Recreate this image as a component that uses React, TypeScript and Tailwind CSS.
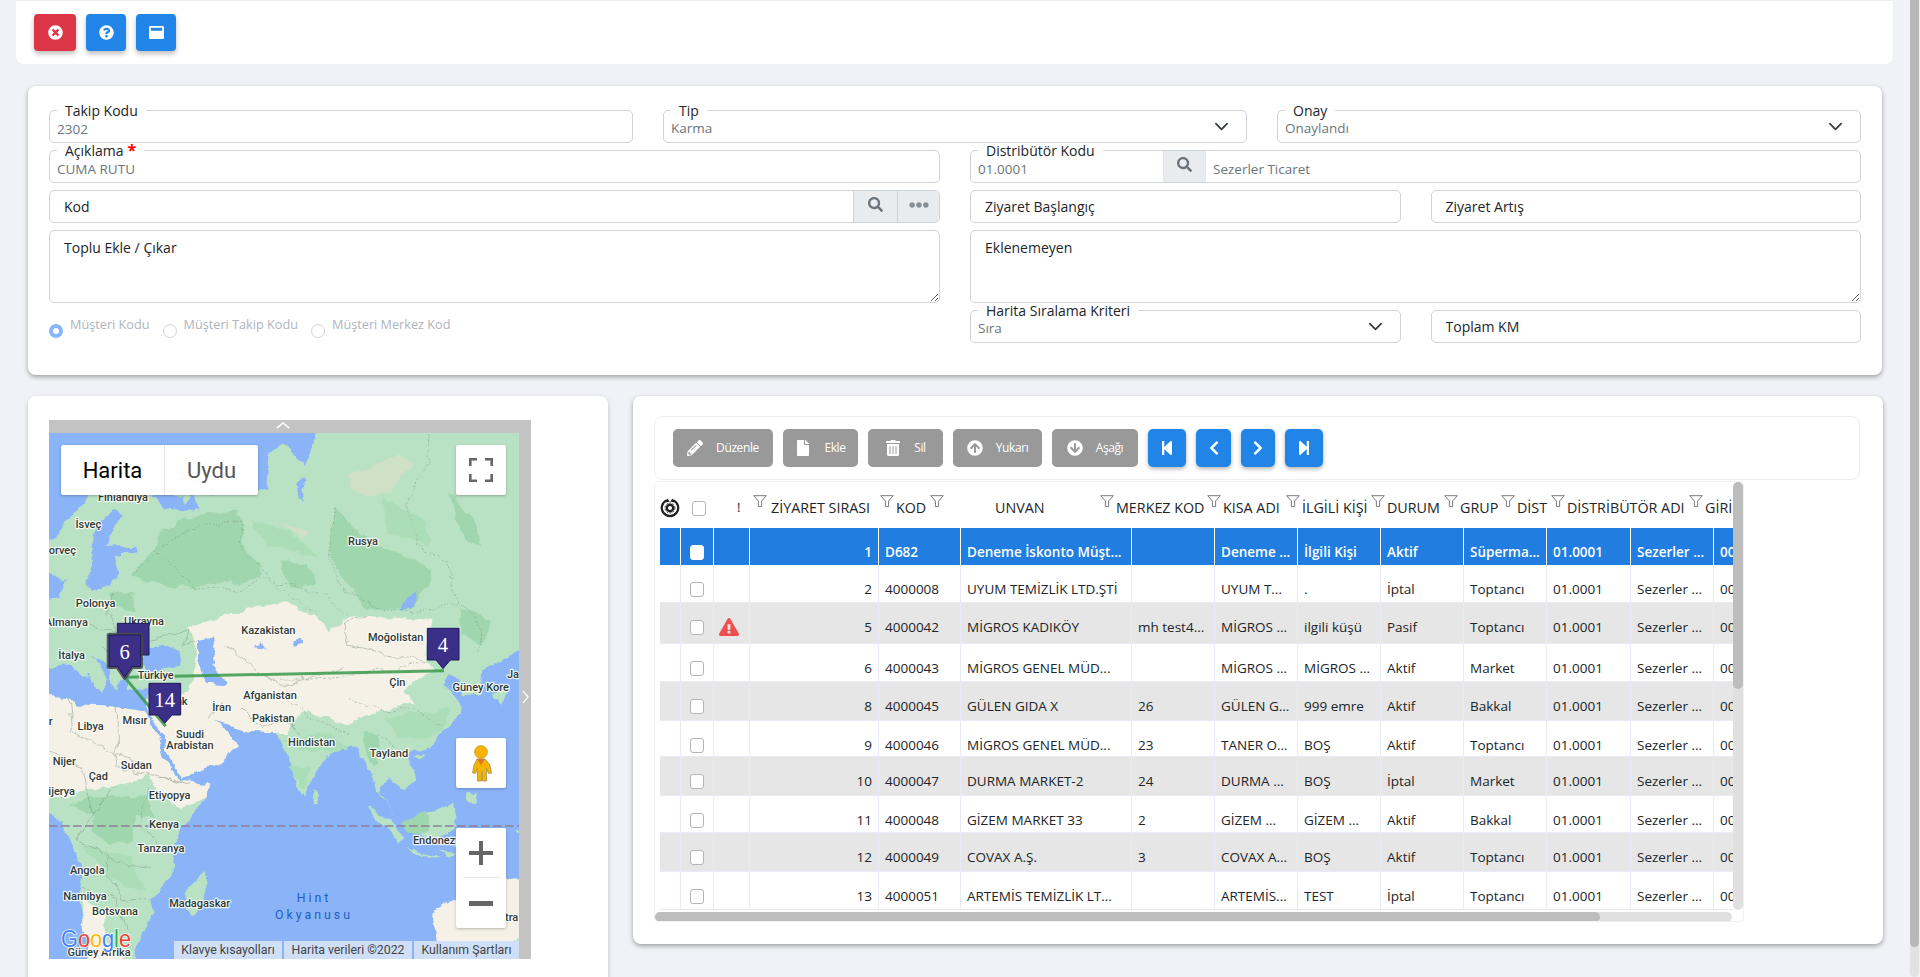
import React from 'react';
import {
  FaTimesCircle,
  FaQuestionCircle,
  FaWindowMaximize,
  FaSearch,
  FaEllipsisH,
  FaPencilAlt,
  FaFile,
  FaTrashAlt,
  FaArrowCircleUp,
  FaArrowCircleDown,
  FaStepBackward,
  FaStepForward,
  FaChevronLeft,
  FaChevronRight,
  FaExclamationTriangle,
} from 'react-icons/fa';

const Chevron = () => (
  <svg viewBox="0 0 16 16" className="w-[15px] h-[15px] shrink-0 text-[#343a40]" fill="none" stroke="currentColor" strokeWidth="1.8" strokeLinecap="round" strokeLinejoin="round">
    <path d="M2 5l6 6 6-6" />
  </svg>
);

const FloatLabel = ({ text, required }: { text: string; required?: boolean }) => (
  <span className="absolute -top-[8px] left-[7px] bg-white px-2 text-[14px] leading-4 font-medium text-[#212529] whitespace-nowrap">
    {text}
    {required && <span className="text-[#ff0000] text-[16px] leading-3 ml-1 font-bold">*</span>}
  </span>
);

const Field = ({ label, value, required }: { label: string; value: string; required?: boolean }) => (
  <div className="relative h-[33px] rounded-[5px] border border-[#ced4da] bg-white">
    <FloatLabel text={label} required={required} />
    <input readOnly value={value} className="w-full h-full pl-[7px] pt-[5px] text-[13.500px] text-[#6c757d] bg-transparent outline-none rounded-[5px]" />
  </div>
);

const SelectField = ({ label, value }: { label: string; value: string }) => (
  <div className="relative h-[33px] rounded-[5px] border border-[#ced4da] bg-white flex items-center justify-between pl-[7px] pr-[17px]">
    <FloatLabel text={label} />
    <span className="pt-[4px] text-[13.500px] text-[#6c757d]">{value}</span>
    <Chevron />
  </div>
);

const PlainField = ({ label }: { label: string }) => (
  <input
    readOnly
    placeholder={label}
    className="w-full h-[33px] rounded-[5px] border border-[#ced4da] bg-white pl-[14px] text-[14px] font-medium outline-none placeholder:text-[#212529] placeholder:opacity-100"
  />
);

const AreaField = ({ label }: { label: string }) => (
  <textarea
    readOnly
    placeholder={label}
    className="block w-full h-[73px] rounded-[5px] border border-[#ced4da] bg-white pl-[14px] pt-[6px] text-[14px] font-medium outline-none placeholder:text-[#212529] placeholder:opacity-100"
  />
);

const Radio = ({ label, checked }: { label: string; checked?: boolean }) => (
  <div className="flex items-start gap-[7px]">
    <span className={`mt-[8px] w-[14px] h-[14px] rounded-full bg-white ${checked ? 'border-[4px] border-[#86b7fe]' : 'border border-[#ced4da]'}`} />
    <span className="text-[12.700px] leading-4 text-[#adb5bd]">{label}</span>
  </div>
);

const grayButtons = [
  { label: 'Düzenle', icon: FaPencilAlt, w: 'w-[100px]' },
  { label: 'Ekle', icon: FaFile, w: 'w-[75px]' },
  { label: 'Sil', icon: FaTrashAlt, w: 'w-[75px]' },
  { label: 'Yukarı', icon: FaArrowCircleUp, w: 'w-[89px]' },
  { label: 'Aşağı', icon: FaArrowCircleDown, w: 'w-[86px]' },
];

const blueButtons = [
  { icon: FaStepBackward, w: 'w-[38px]' },
  { icon: FaChevronLeft, w: 'w-[35px]' },
  { icon: FaChevronRight, w: 'w-[34px]' },
  { icon: FaStepForward, w: 'w-[38px]' },
];

const headers = [
  { label: 'ZİYARET SIRASI', w: 'w-[127px]', pad: 'pl-[2px]' },
  { label: 'KOD', w: 'w-[50px]' },
  { label: 'UNVAN', w: 'w-[170px]', pad: 'pl-[49px]' },
  { label: 'MERKEZ KOD', w: 'w-[107px]' },
  { label: 'KISA ADI', w: 'w-[79px]' },
  { label: 'İLGİLİ KİŞİ', w: 'w-[85px]' },
  { label: 'DURUM', w: 'w-[73px]' },
  { label: 'GRUP', w: 'w-[57px]' },
  { label: 'DİST', w: 'w-[50px]' },
  { label: 'DİSTRİBÜTÖR ADI', w: 'w-[138px]' },
  { label: 'GİRİŞ', w: 'w-[60px]' },
];

const colWidths = ['w-[21px]', 'w-[33px]', 'w-[36px]', 'w-[129px]', 'w-[82px]', 'w-[171px]', 'w-[83px]', 'w-[83px]', 'w-[83px]', 'w-[83px]', 'w-[83px]', 'w-[84px]', 'w-[83px]', 'w-[83px]'];

const rows = [
  { h: 'h-[37px]', tone: 'blue', warn: false, cells: ['1', 'D682', 'Deneme İskonto Müşt...', '', 'Deneme ...', 'İlgili Kişi', 'Aktif', 'Süperma...', '01.0001', 'Sezerler ...', '0001'] },
  { h: 'h-[38px]', tone: 'white', warn: false, cells: ['2', '4000008', 'UYUM TEMİZLİK LTD.ŞTİ', '', 'UYUM T...', '.', 'İptal', 'Toptancı', '01.0001', 'Sezerler ...', '0001'] },
  { h: 'h-[41px]', tone: 'gray', warn: true, cells: ['5', '4000042', 'MİGROS KADIKÖY', 'mh test4...', 'MİGROS ...', 'ilgili küşü', 'Pasif', 'Toptancı', '01.0001', 'Sezerler ...', '0001'] },
  { h: 'h-[38px]', tone: 'white', warn: false, cells: ['6', '4000043', 'MİGROS GENEL MÜD...', '', 'MİGROS ...', 'MİGROS ...', 'Aktif', 'Market', '01.0001', 'Sezerler ...', '0001'] },
  { h: 'h-[39px]', tone: 'gray', warn: false, cells: ['8', '4000045', 'GÜLEN GIDA X', '26', 'GÜLEN G...', '999 emre', 'Aktif', 'Bakkal', '01.0001', 'Sezerler ...', '0001'] },
  { h: 'h-[36px]', tone: 'white', warn: false, cells: ['9', '4000046', 'MİGROS GENEL MÜD...', '23', 'TANER O...', 'BOŞ', 'Aktif', 'Toptancı', '01.0001', 'Sezerler ...', '0001'] },
  { h: 'h-[39px]', tone: 'gray', warn: false, cells: ['10', '4000047', 'DURMA MARKET-2', '24', 'DURMA ...', 'BOŞ', 'İptal', 'Market', '01.0001', 'Sezerler ...', '0001'] },
  { h: 'h-[37px]', tone: 'white', warn: false, cells: ['11', '4000048', 'GİZEM MARKET 33', '2', 'GİZEM ...', 'GİZEM ...', 'Aktif', 'Bakkal', '01.0001', 'Sezerler ...', '0001'] },
  { h: 'h-[39px]', tone: 'gray', warn: false, cells: ['12', '4000049', 'COVAX A.Ş.', '3', 'COVAX A...', 'BOŞ', 'Aktif', 'Toptancı', '01.0001', 'Sezerler ...', '0001'] },
  { h: 'h-[38px]', tone: 'white', warn: false, cells: ['13', '4000051', 'ARTEMİS TEMİZLİK LT...', '', 'ARTEMİS...', 'TEST', 'İptal', 'Toptancı', '01.0001', 'Sezerler ...', '0001'] },
];

const FilterIcon = () => (
  <svg viewBox="0 0 14 13" className="w-[14px] h-[13px] shrink-0 -mt-[14px]" fill="#fff" stroke="#7a7a7a" strokeWidth="1">
    <path d="M.7.7h12.6L8.6 6v5.6H5.4V6z" />
  </svg>
);

const SettingsIcon = () => (
  <svg viewBox="0 0 20 20" className="w-5 h-5 shrink-0" fill="none">
    <path d="M7 2.2A8.2 8.2 0 1 0 13 2.2" stroke="#1f1f1f" strokeWidth="2.2" />
    <path d="M7.4 .6 9.8 3.4 6 4.4z M12.6 .6 10.2 3.4 14 4.4z" fill="#1f1f1f" />
    <circle cx="10" cy="10" r="3.2" stroke="#1f1f1f" strokeWidth="2.4" />
    <circle cx="10" cy="10" r="5" stroke="#1f1f1f" strokeWidth="1" strokeDasharray="1.6 1.6" />
  </svg>
);

const Checkbox = ({ white }: { white?: boolean }) => (
  <span className={`block w-[14px] h-[15px] rounded-[3px] border ${white ? 'bg-white border-white' : 'bg-white border-[#b5b5b5]'}`} />
);

// map labels, x and y in the 3x drawing units of the map
const mapLabels: [string, number, number][] = [
  ['Finlandiya', 222, 194],
  ['İsveç', 118, 273],
  ['orveç', 40, 353],
  ['Rusya', 942, 326],
  ['Polonya', 140, 512],
  ['Almanya', 52, 569],
  ['Ukrayna', 285, 566],
  ['Kazakistan', 658, 591],
  ['Moğolistan', 1040, 613],
  ['İtalya', 68, 666],
  ['Türkiye', 320, 728],
  ['Çin', 1045, 748],
  ['Güney Kore', 1295, 763],
  ['Ja', 1392, 724],
  ['Afganistan', 663, 788],
  ['İran', 518, 823],
  ['Irak', 388, 806],
  ['Pakistan', 673, 856],
  ['Mısır', 258, 861],
  ['Libya', 125, 879],
  ['r', 5, 866],
  ['Suudi', 423, 903],
  ['Arabistan', 423, 936],
  ['Hindistan', 788, 928],
  ['Tayland', 1020, 962],
  ['Nijer', 46, 986],
  ['Çad', 148, 1029],
  ['Sudan', 262, 996],
  ['ijerya', 38, 1076],
  ['Etiyopya', 362, 1087],
  ['Kenya', 345, 1174],
  ['Tanzanya', 336, 1246],
  ['Endonezya', 1172, 1222],
  ['Angola', 115, 1312],
  ['Namibya', 108, 1389],
  ['Madagaskar', 452, 1411],
  ['Botsvana', 198, 1434],
  ['Güney Afrika', 150, 1558],
  ['tra', 1388, 1454],
];

const Marker = ({ x, y, tip, text, halo }: { x: number; y: number; tip: number; text?: string; halo?: boolean }) => {
  const d = `M${x} ${y}h95v95h-26L${x + 47} ${tip}L${x + 26} ${y + 95}H${x}z`;
  return (
    <g>
      {halo && <path d={d} fill="#4b4b4b" stroke="#4b4b4b" strokeWidth="14" strokeLinejoin="round" opacity="0.85" />}
      <path d={d} fill="#3b2f88" stroke="#1d1a5c" strokeWidth="3" strokeLinejoin="round" />
      {text && (
        <text x={x + 47} y={y + 50} textAnchor="middle" dominantBaseline="central" fill="#fff" fontSize="62" fontFamily="'Liberation Serif', serif" fontWeight="500">
          {text}
        </text>
      )}
    </g>
  );
};

const MapDrawing = () => (
  <svg viewBox="0 0 1410 1578" className="block w-full h-full" preserveAspectRatio="none">
    <defs>
      <filter id="rough" x="-5%" y="-5%" width="110%" height="110%">
        <feTurbulence type="fractalNoise" baseFrequency="0.018" numOctaves="4" seed="7" result="n" />
        <feDisplacementMap in="SourceGraphic" in2="n" scale="34" xChannelSelector="R" yChannelSelector="G" />
        <feGaussianBlur stdDeviation="1.2" />
      </filter>
    </defs>
    <rect width="1410" height="1578" fill="#8ab4f7" />
    <g filter="url(#rough)">
      {/* Eurasia */}
      <path
        fill="#b9e2c5"
        d="M800 -30L1440 -30V640L1350 680 1300 720 1292 785 1245 790 1240 745 1200 725 1188 755 1218 800 1240 826 1200 886 1150 926 1110 956 1065 956 1100 1016 1105 1046 1060 1076 1040 1051 1010 1031 995 1076 1040 1161 1010 1106 985 1076 960 1006 920 941 870 941 800 1011 765 1091 720 986 700 926 680 896 600 896 480 861 440 815 470 850 520 880 570 936 500 996 400 1041 350 956 322 871 300 846 296 826 300 770 240 770 240 720 205 770 180 715 125 660 180 745 155 785 125 735 70 695 -30 695V510L35 495 50 440 -30 400V340L30 295 70 235 130 185 620 180 655 172 662 60 700 30 735 55 775 100 790 40z"
      />
      {/* Africa */}
      <path
        fill="#b9e2c5"
        d="M-30 785L60 790 80 815 150 816 200 821 290 836 308 871 343 976 395 1048 487 1054 470 1096 395 1181 375 1256 370 1336 310 1396 315 1446 280 1496 245 1600H130L100 1466 85 1386 100 1326 80 1256 60 1206 40 1161 -30 1126z"
      />
      {/* Islands */}
      <path fill="#b9e2c5" d="M410 1376L470 1316 476 1366 430 1456 405 1436z M790 1076L806 1086 812 1116 796 1116z M955 1121L1000 1140 1070 1216 1050 1226 1000 1180z M1070 1246L1170 1266 1172 1272 1100 1262z M1105 1161L1160 1130 1210 1116 1222 1186 1140 1226 1110 1200z M1250 1076L1290 1086 1280 1116 1255 1100z M1095 975L1120 965 1115 985z M1330 786L1380 770 1360 815z M1400 1190L1440 1180V1230z M1170 1246L1220 1262 1190 1272z" />
      {/* Australia */}
      <path fill="#f5f1e6" d="M1150 1436L1230 1400 1300 1390 1370 1340 1440 1330V1600H1170L1160 1500z" />
      <path fill="#b9e2c5" d="M1320 1560L1440 1500V1600H1330z" />
      {/* dark forest */}
      <path fill="#9fd6ae" d="M340 290L430 250 570 225 590 345 640 395 640 435 430 465 240 435 320 345z M860 225L960 325 1090 375 1150 415 1090 535 950 525 900 465 840 365z M130 1136L260 1130 250 1226 180 1236 135 1196z M940 896L990 906 990 996 960 986z M1060 1166L1130 1140 1140 1190 1080 1200z M700 380L770 395 800 450 720 470z M1200 180L1280 260 1300 340 1240 320z M1230 520L1330 560 1300 640 1240 610z M180 480L250 470 260 540 200 530z M60 1120L130 1090 300 1090 320 1150 130 1140z" />
      <path fill="#abddb9" d="M600 260L720 290 800 370 660 340z M1000 200L1130 260 1150 340 1020 300z M100 1240L240 1270 290 1370 200 1350z M700 920L850 900 900 950 780 960z M1000 850L1200 830 1180 900 1050 920z M720 1000L780 1000 770 1070z" />
      {/* plateau */}
      <path fill="#cfe0c6" d="M890 130L960 110 1050 60 1090 90 1030 180 960 190 900 170z M700 270L780 300 760 320z" />
      {/* steppe and desert */}
      <path fill="#f5f1e6" d="M415 580L480 565 560 540 720 510 790 550 840 600 880 560 960 550 1150 560 1135 630 1130 690 1150 715 1060 770 1100 810 1000 830 890 880 780 830 720 870 720 900 660 900 600 896 480 861 440 815 470 850 520 880 570 936 500 996 400 1041 350 956 322 871 300 846 296 800 420 770 440 690 445 640z" />
      <path fill="#f5f1e6" d="M-30 785L60 790 80 815 150 816 200 821 290 836 308 871 343 976 395 1048 487 1054 470 1096 395 1130 340 1090 300 1020 200 1060 100 1070 50 1090 -30 1100z" />
      <path fill="#f5f1e6" d="M100 1400L170 1440 170 1530 245 1600H130L100 1466z" />
      {/* inland seas */}
      <path fill="#8ab4f7" d="M135 395L130 330 150 270 190 235 215 250 190 300 175 345 255 338 260 350 195 375 205 420 190 455 125 470 105 450 130 420z M310 188L410 188 405 215 440 192 452 225 400 235 345 225z M738 150L758 130 768 205 750 195z M292 650L340 632 392 655 398 700 350 715 290 712 280 690z M450 620L495 610 500 650 490 690 530 760 470 755 450 680z M620 640L640 625 650 645z M730 625L755 615 760 630 735 635z M1070 500L1110 470 1090 530 1060 540z" />
      {/* borders */}
      <g fill="none" stroke="#7f8f86" strokeWidth="2" opacity="0.7">
        <path strokeDasharray="6 5" d="M575 260L580 350 630 395 690 470 800 540M320 350L430 285 570 265M240 430L330 360 440 470 560 470 640 440 830 480 900 550M860 230L840 370 880 470 1000 530 1100 540 1240 510 1300 580 1290 660M1130 0L1140 90 1070 210 1100 330 1190 380 1230 510M690 740L880 730 1100 700M900 800L1000 830 1100 830 1180 880M700 800L800 860 900 900M990 900L1060 960" />
        <path d="M420 590L400 640 450 620M530 640L700 760 880 700M960 550L880 570 900 640 1130 690M200 470L170 540 220 620 300 620 420 590M120 580L220 600M160 640L240 700M60 790L70 890 190 960 290 1000M205 820V1000L300 1020 400 1050M0 960L100 1000 130 1140M200 1060L130 1140 90 1230 180 1270 230 1300 310 1300M300 1070L270 1180 330 1240 370 1250M180 1270L175 1330 220 1400 310 1400M100 1360L200 1400 240 1490M330 1030L420 1060M518 800L480 860M580 820L640 880 700 860 760 900" />
      </g>
    </g>
    {/* equator */}
    <path d="M0 1179H1410" stroke="#8f7d9a" strokeWidth="5" strokeDasharray="26 10" />
    {/* route */}
    <g fill="none" stroke="#3a9a4a" strokeWidth="9" opacity="0.85">
      <path d="M227 733L1185 713" />
      <path d="M227 733L350 880" />
    </g>
    {mapLabels.map(([t, x, y]) => (
      <text
        key={t}
        x={x}
        y={y}
        textAnchor="middle"
        dominantBaseline="central"
        fontSize="33"
        fontFamily="Roboto, sans-serif"
        fontWeight="500"
        fill="#2f3a36"
        stroke="#ffffff"
        strokeOpacity="0.85"
        strokeWidth="7"
        strokeLinejoin="round"
        paintOrder="stroke"
      >
        {t}
      </text>
    ))}
    <text x="795" y="1394" textAnchor="middle" dominantBaseline="central" fontSize="37" letterSpacing="9" fontFamily="Roboto, sans-serif" fill="#1f5fc4">Hint</text>
    <text x="795" y="1446" textAnchor="middle" dominantBaseline="central" fontSize="37" letterSpacing="9" fontFamily="Roboto, sans-serif" fill="#1f5fc4">Okyanusu</text>
    <Marker x={1135} y={586} tip={707} text="4" />
    <Marker x={205} y={571} tip={690} />
    <Marker x={180} y={606} tip={733} text="6" halo />
    <Marker x={300} y={751} tip={871} text="14" />
    <text x="36" y="1541" fontSize="74" textLength="210" lengthAdjust="spacingAndGlyphs" fontFamily="'Liberation Sans', sans-serif" stroke="#fff" strokeWidth="5" strokeOpacity="0.9" paintOrder="stroke">
      <tspan fill="#4285f4">G</tspan>
      <tspan fill="#ea4335">o</tspan>
      <tspan fill="#fbbc05">o</tspan>
      <tspan fill="#4285f4">g</tspan>
      <tspan fill="#34a853">l</tspan>
      <tspan fill="#ea4335">e</tspan>
    </text>
  </svg>
);

const MapPanel = () => (
  <div className="relative w-[482px] h-[539px] bg-[#c3c3c3] pt-[13px] pr-[12px]">
    <svg viewBox="0 0 16 8" className="absolute top-[2px] left-[227px] w-[14px] h-[7px]" fill="none" stroke="#fff" strokeWidth="1.6">
      <path d="M1 7l7-6 7 6" />
    </svg>
    <svg viewBox="0 0 8 16" className="absolute top-[270px] right-[2px] w-[7px] h-[14px]" fill="none" stroke="#fff" strokeWidth="1.4">
      <path d="M1 1l6 7-6 7" />
    </svg>
    <div className="relative w-full h-full overflow-hidden font-['Roboto',sans-serif]">
      <MapDrawing />
      <div className="absolute top-[12px] left-[12px] h-[50px] w-[197px] bg-white rounded-[2px] shadow-[0_1px_3px_rgba(0,0,0,0.25)] flex items-center text-[22px]">
        <span className="w-[104px] h-full flex items-center justify-center text-black border-r border-[#e6e6e6]">Harita</span>
        <span className="flex-1 flex items-center justify-center text-[#565656]">Uydu</span>
      </div>
      <div className="absolute top-[12px] left-[407px] w-[50px] h-[50px] bg-white rounded-[2px] shadow-[0_1px_3px_rgba(0,0,0,0.25)] flex items-center justify-center">
        <svg viewBox="0 0 24 24" className="w-[24px] h-[24px]" fill="none" stroke="#666" strokeWidth="2.6">
          <path d="M1.3 8V1.3H8M16 1.3h6.7V8M22.7 16v6.7H16M8 22.7H1.3V16" />
        </svg>
      </div>
      <div className="absolute top-[305px] left-[407px] w-[50px] h-[50px] bg-white rounded-[2px] shadow-[0_1px_3px_rgba(0,0,0,0.25)] flex items-center justify-center">
        <svg viewBox="0 0 22 37" className="w-[22px] h-[37px]">
          <circle cx="11" cy="7" r="6.5" fill="#f5b400" stroke="#a8832a" strokeWidth="0.5" />
          <path d="M7 14h8l5 6 1.500 8-3 .5-2-5V36h-4v-9h-1v9H7.500V23.500l-2 5-3-.5L4 20z" fill="#f5b400" stroke="#8a7a4a" strokeWidth="0.6" />
          <path d="M7 14h8l-4 6z" fill="#e0752d" />
        </svg>
      </div>
      <div className="absolute top-[395px] left-[407px] w-[50px] h-[100px] bg-white rounded-[2px] shadow-[0_1px_3px_rgba(0,0,0,0.25)] flex flex-col items-center">
        <div className="h-[50px] w-[37px] flex items-center justify-center border-b border-[#e6e6e6]">
          <svg viewBox="0 0 24 24" className="w-[24px] h-[24px]" fill="#666"><path d="M10 0h4v10h10v4H14v10h-4V14H0v-4h10z" /></svg>
        </div>
        <div className="h-[50px] flex items-center justify-center">
          <svg viewBox="0 0 24 24" className="w-[24px] h-[24px]" fill="#666"><path d="M0 10h24v5H0z" /></svg>
        </div>
      </div>
      <div className="absolute bottom-0 right-0 h-[18px] flex gap-[2px] text-[12.300px] leading-[19px] text-[#444] whitespace-nowrap">
        <span className="w-[108px] text-center bg-[#cfdff8]">Klavye kısayolları</span>
        <span className="w-[128px] text-center bg-[#cfdff8]">Harita verileri ©2022</span>
        <span className="w-[105px] text-center bg-[#cfdff8]">Kullanım Şartları</span>
      </div>
    </div>
  </div>
);

export default function App() {
  return (
    <div className="flex w-full h-[977px] overflow-hidden bg-[#f0f2f7] font-['Open_Sans',sans-serif] text-[#212529]">
      <main className="flex-1 min-w-0">
        {/* top actions */}
        <div className="ml-[16px] mr-[17px] h-[64px] bg-white rounded-b-lg border-t border-[#eceef3] flex items-center gap-[10px] pl-[18px]">
          <button className="w-[42px] h-[37px] rounded bg-[#dc3545] text-white flex items-center justify-center shadow-[0_3px_5px_rgba(0,0,0,0.25)]">
            <FaTimesCircle className="w-[15px] h-[15px]" />
          </button>
          <button className="w-[40px] h-[37px] rounded bg-[#2185e8] text-white flex items-center justify-center shadow-[0_3px_5px_rgba(0,0,0,0.25)]">
            <FaQuestionCircle className="w-[15px] h-[15px]" />
          </button>
          <button className="w-[40px] h-[37px] rounded bg-[#2185e8] text-white flex items-center justify-center shadow-[0_3px_5px_rgba(0,0,0,0.25)]">
            <FaWindowMaximize className="w-[15px] h-[15px]" />
          </button>
        </div>

        {/* form */}
        <section className="mt-[22px] ml-[28px] mr-[28px] h-[289px] bg-white rounded-lg shadow-[0_2px_5px_rgba(0,0,0,0.35)] px-[21px] pt-[24px] flex flex-col gap-[7px]">
          <div className="grid grid-cols-3 gap-x-[30px]">
            <Field label="Takip Kodu" value="2302" />
            <SelectField label="Tip" value="Karma" />
            <SelectField label="Onay" value="Onaylandı" />
          </div>
          <div className="grid grid-cols-2 gap-x-[30px]">
            <div className="flex flex-col gap-[7px]">
              <Field label="Açıklama" value="CUMA RUTU" required />
              <div className="flex h-[33px] rounded-[5px] border border-[#ced4da] overflow-hidden">
                <input readOnly placeholder="Kod" className="flex-1 min-w-0 pl-[14px] text-[14px] font-medium outline-none placeholder:text-[#212529] placeholder:opacity-100" />
                <span className="w-[44px] bg-[#e9ecef] border-l border-[#ced4da] flex items-center justify-center text-[#6c757d]">
                  <FaSearch className="w-[15px] h-[15px] -mt-[4px]" />
                </span>
                <span className="w-[42px] bg-[#e9ecef] border-l border-[#ced4da] flex items-center justify-center text-[#868e96]">
                  <FaEllipsisH className="w-[20px] h-[20px] -mt-[4px]" />
                </span>
              </div>
              <AreaField label="Toplu Ekle / Çıkar" />
              <div className="flex gap-[13px] mt-[6px]">
                <Radio label="Müşteri Kodu" checked />
                <Radio label="Müşteri Takip Kodu" />
                <Radio label="Müşteri Merkez Kod" />
              </div>
            </div>
            <div className="flex flex-col gap-[7px]">
              <div className="relative flex h-[33px] rounded-[5px] border border-[#ced4da]">
                <FloatLabel text="Distribütör Kodu" />
                <input readOnly value="01.0001" className="w-[192px] pl-[7px] pt-[5px] text-[13.500px] text-[#6c757d] outline-none rounded-l-[5px]" />
                <span className="w-[43px] bg-[#e9ecef] border-x border-[#e3e6ea] flex items-center justify-center text-[#6c757d]">
                  <FaSearch className="w-[15px] h-[15px] -mt-[4px]" />
                </span>
                <input readOnly value="Sezerler Ticaret" className="flex-1 min-w-0 pl-[7px] pt-[5px] text-[13.500px] text-[#6c757d] outline-none rounded-r-[5px]" />
              </div>
              <div className="grid grid-cols-2 gap-x-[30px]">
                <PlainField label="Ziyaret Başlangıç" />
                <PlainField label="Ziyaret Artış" />
              </div>
              <AreaField label="Eklenemeyen" />
              <div className="grid grid-cols-2 gap-x-[30px]">
                <SelectField label="Harita Sıralama Kriteri" value="Sıra" />
                <PlainField label="Toplam KM" />
              </div>
            </div>
          </div>
        </section>

        {/* map and grid */}
        <div className="mt-[21px] pl-[28px] flex items-start gap-[25px]">
          <section className="w-[580px] h-[620px] bg-white rounded-lg shadow-[0_2px_5px_rgba(0,0,0,0.2)] pl-[21px] pt-[24px]">
            <MapPanel />
          </section>

          <section className="w-[1250px] bg-white rounded-lg shadow-[0_2px_5px_rgba(0,0,0,0.35)] pl-[21px] pr-[23px] pt-[20px] pb-[22px]">
            <div className="h-[64px] rounded-lg border border-[#eeeff4] flex items-center gap-[10px] pl-[18px]">
              {grayButtons.map((b) => (
                <button key={b.label} className={`${b.w} h-[38px] rounded-[5px] bg-[#999999] text-white text-[12px] tracking-[-0.4px] flex items-center justify-center gap-[13px]`}>
                  <b.icon className="w-[16px] h-[16px]" />
                  {b.label}
                </button>
              ))}
              {blueButtons.map((b, i) => (
                <button key={i} className={`${b.w} h-[38px] rounded-[5px] bg-[#2185e8] text-white flex items-center justify-center shadow-[0_2px_4px_rgba(0,0,0,0.3)]`}>
                  <b.icon className="w-[16px] h-[16px]" />
                </button>
              ))}
            </div>

            <div className="mt-px w-[1090px] h-[441px] rounded border border-[#f0f1f5] overflow-hidden">
              <div className="flex h-[428px]">
                <div className="w-[1079px] overflow-hidden pl-[5px]">
                  <div className="h-[46px] flex items-center w-[1200px] pt-[6px] text-[14.300px] whitespace-nowrap">
                    <div className="w-[93px] shrink-0 flex items-center">
                      <SettingsIcon />
                      <span className="ml-[12px]"><Checkbox /></span>
                      <span className="ml-[31px] text-[13px]">!</span>
                    </div>
                    {headers.map((h) => (
                      <div key={h.label} className={`${h.w} shrink-0 flex items-center gap-[2px]`}>
                        <FilterIcon />
                        <span className={h.pad}>{h.label}</span>
                      </div>
                    ))}
                  </div>
                  <table className="table-fixed w-[1137px] border-separate border-spacing-0 text-[13.500px]">
                    <colgroup>
                      {colWidths.map((w, i) => (
                        <col key={i} className={w} />
                      ))}
                    </colgroup>
                    <tbody>
                      {rows.map((r) => {
                        const bg = r.tone === 'blue' ? 'bg-[#217ee0] text-white font-semibold' : r.tone === 'gray' ? 'bg-[#e6e6e6]' : 'bg-white';
                        const line = r.tone === 'blue' ? 'border-r border-white' : 'border-r border-b border-[#e8ebf5]';
                        return (
                          <tr key={r.cells[0]} className={`${r.h} ${bg}`}>
                            <td className={line} />
                            <td className={`${line} align-top pt-[17px] pl-[9px]`}>
                              <Checkbox white={r.tone === 'blue'} />
                            </td>
                            <td className={`${line} align-top pt-[15px] pl-[5px]`}>
                              {r.warn && <FaExclamationTriangle className="w-[20px] h-[18px] text-[#ef4f4f]" />}
                            </td>
                            {r.cells.map((c, i) => (
                              <td key={i} className={`${line} align-top pt-[14px] px-[6px] whitespace-nowrap overflow-hidden leading-5 ${i === 0 ? 'text-right' : ''}`}>
                                {c}
                              </td>
                            ))}
                          </tr>
                        );
                      })}
                    </tbody>
                  </table>
                </div>
                <div className="w-[10px] bg-[#e0e0e0] rounded-[5px] ml-auto">
                  <div className="h-[207px] bg-[#bdbdbd] rounded-[5px]" />
                </div>
              </div>
              <div className="mt-[2px] h-[10px] w-[1077px] bg-[#e0e0e0] rounded-[5px]">
                <div className="h-full w-[945px] bg-[#bdbdbd] rounded-[5px]" />
              </div>
            </div>
          </section>
        </div>
      </main>

      {/* page scrollbar */}
      <div className="w-[10px] h-full pr-px">
        <div className="h-full bg-[#e2e2e2] rounded-b-[5px]">
          <div className="h-[947px] bg-[#b8b8b8] rounded-b-[5px]" />
        </div>
      </div>
    </div>
  );
}
